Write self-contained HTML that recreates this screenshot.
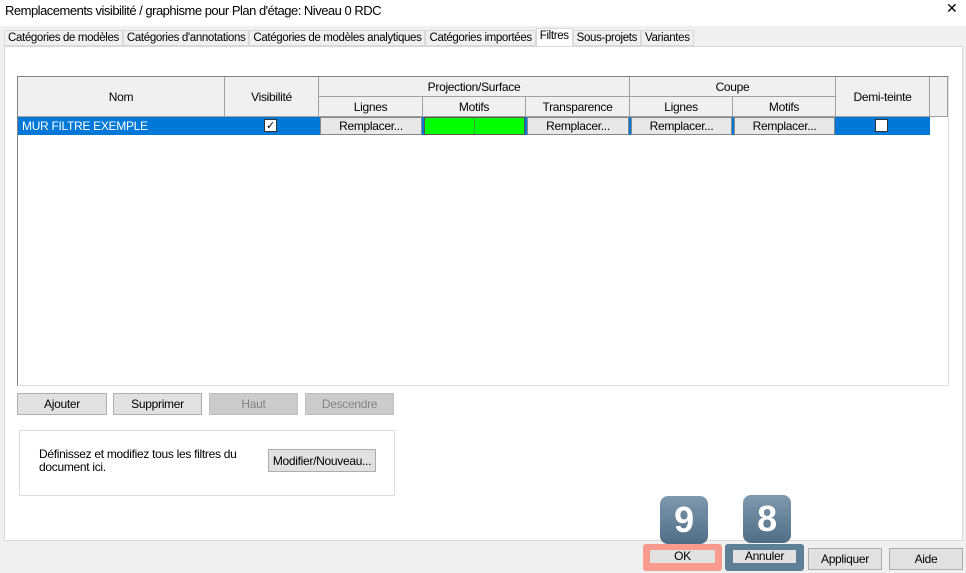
<!DOCTYPE html><html><head><meta charset="utf-8"><style>
*{margin:0;padding:0;box-sizing:border-box}
body{width:966px;height:573px;background:#f0f0f0;font-family:"Liberation Sans",sans-serif;font-size:12px;letter-spacing:-0.3px;color:#000;position:relative;overflow:hidden}
.a{position:absolute}
.c{display:flex;align-items:center;justify-content:center}
.h{background:#f0f0f0;border-right:1px solid #a0a0a0;border-bottom:1px solid #a0a0a0}
.btn{background:#e1e1e1;border:1px solid #adadad}
.rb{background:#e8e8e8;border:1px solid #888;top:117px;height:18px}
.t{border:1px solid #d9d9d9;background:#f0f0f0;padding:0 3px;line-height:15px}
</style></head><body>
<div class="a" style="left:0;top:0;width:966px;height:26px;background:#fff"></div>
<div class="a" style="left:5px;top:3px;font-size:13px;letter-spacing:-0.5px">Remplacements visibilité / graphisme pour Plan d'étage: Niveau 0 RDC</div>
<div class="a" style="left:946px;top:0;font-size:14px;font-weight:300">✕</div>
<div class="a" style="left:4px;top:30px;height:16px;display:flex;font-size:11.5px;letter-spacing:-0.35px">
<div class="t">Catégories de modèles</div>
<div class="t">Catégories d'annotations</div>
<div class="t">Catégories de modèles analytiques</div>
<div class="t">Catégories importées</div>
<div class="t" style="border-bottom:none;background:#fff;margin-top:-2px;height:18px">Filtres</div>
<div class="t">Sous-projets</div>
<div class="t">Variantes</div>
</div>
<div class="a" style="left:4px;top:46px;width:959px;height:495px;background:#fff;border:1px solid #d9d9d9"></div>
<div class="a" style="left:17px;top:76px;width:932px;height:310px;background:#fff;border:1px solid #828282;border-bottom-color:#e0e0e0;border-right-color:#e0e0e0"></div>
<div class="a h c" style="left:18px;top:77px;width:207px;height:40px">Nom</div>
<div class="a h c" style="left:225px;top:77px;width:94px;height:40px">Visibilité</div>
<div class="a h c" style="left:319px;top:77px;width:311px;height:20px">Projection/Surface</div>
<div class="a h c" style="left:319px;top:97px;width:104px;height:20px">Lignes</div>
<div class="a h c" style="left:423px;top:97px;width:103px;height:20px">Motifs</div>
<div class="a h c" style="left:526px;top:97px;width:104px;height:20px">Transparence</div>
<div class="a h c" style="left:630px;top:77px;width:206px;height:20px">Coupe</div>
<div class="a h c" style="left:630px;top:97px;width:103px;height:20px">Lignes</div>
<div class="a h c" style="left:733px;top:97px;width:103px;height:20px">Motifs</div>
<div class="a h c" style="left:836px;top:77px;width:94px;height:40px">Demi-teinte</div>
<div class="a h" style="left:930px;top:77px;width:18px;height:40px"></div>
<div class="a" style="left:18px;top:117px;width:912px;height:18px;background:#0078d7"></div>
<div class="a" style="left:22px;top:119px;color:#fff">MUR FILTRE EXEMPLE</div>
<div class="a c" style="left:264px;top:119px;width:13px;height:13px;background:#fff;border:1px solid #333;font-size:11px">✓</div>
<div class="a rb c" style="left:320px;width:102px">Remplacer...</div>
<div class="a" style="left:424px;top:117px;width:101px;height:18px;background:#00ff00;border:1px solid #555"></div>
<div class="a" style="left:474px;top:118px;width:1px;height:16px;background:#3a3"></div>
<div class="a rb c" style="left:527px;width:102px">Remplacer...</div>
<div class="a rb c" style="left:631px;width:101px">Remplacer...</div>
<div class="a rb c" style="left:734px;width:101px">Remplacer...</div>
<div class="a" style="left:875px;top:119px;width:13px;height:13px;background:#fff;border:1px solid #333"></div>
<div class="a btn c" style="left:17px;top:393px;width:90px;height:22px">Ajouter</div>
<div class="a btn c" style="left:113px;top:393px;width:89px;height:22px">Supprimer</div>
<div class="a c" style="left:209px;top:393px;width:89px;height:22px;background:#ccc;border:1px solid #bfbfbf;color:#838383">Haut</div>
<div class="a c" style="left:305px;top:393px;width:89px;height:22px;background:#ccc;border:1px solid #bfbfbf;color:#838383">Descendre</div>
<div class="a" style="left:19px;top:430px;width:376px;height:66px;border:1px solid #dcdcdc;background:#fff"></div>
<div class="a" style="left:39px;top:448px;line-height:13px">Définissez et modifiez tous les filtres du<br>document ici.</div>
<div class="a btn c" style="left:268px;top:449px;width:108px;height:23px">Modifier/Nouveau...</div>
<div class="a c" style="left:643px;top:544px;width:79px;height:27px;background:#f99a8e;border-radius:3px"></div>
<div class="a c" style="left:650px;top:550px;width:65px;height:13px;background:#e1e1e1;line-height:13px;overflow:hidden">OK</div>
<div class="a" style="left:725px;top:544px;width:79px;height:27px;background:#5f7f96;border-radius:3px"></div>
<div class="a c" style="left:733px;top:550px;width:63px;height:13px;background:#e1e1e1;line-height:13px;overflow:hidden">Annuler</div>
<div class="a btn c" style="left:808px;top:548px;width:74px;height:22px">Appliquer</div>
<div class="a btn c" style="left:889px;top:548px;width:74px;height:22px">Aide</div>
<div class="a c" style="left:660px;top:496px;width:48px;height:48px;background:linear-gradient(#7f98ad,#4f6e86);border-radius:8px;color:#fff;font-size:36px;font-weight:bold">9</div>
<div class="a c" style="left:743px;top:495px;width:48px;height:48px;background:linear-gradient(#7f98ad,#4f6e86);border-radius:8px;color:#fff;font-size:36px;font-weight:bold">8</div>
</body></html>
